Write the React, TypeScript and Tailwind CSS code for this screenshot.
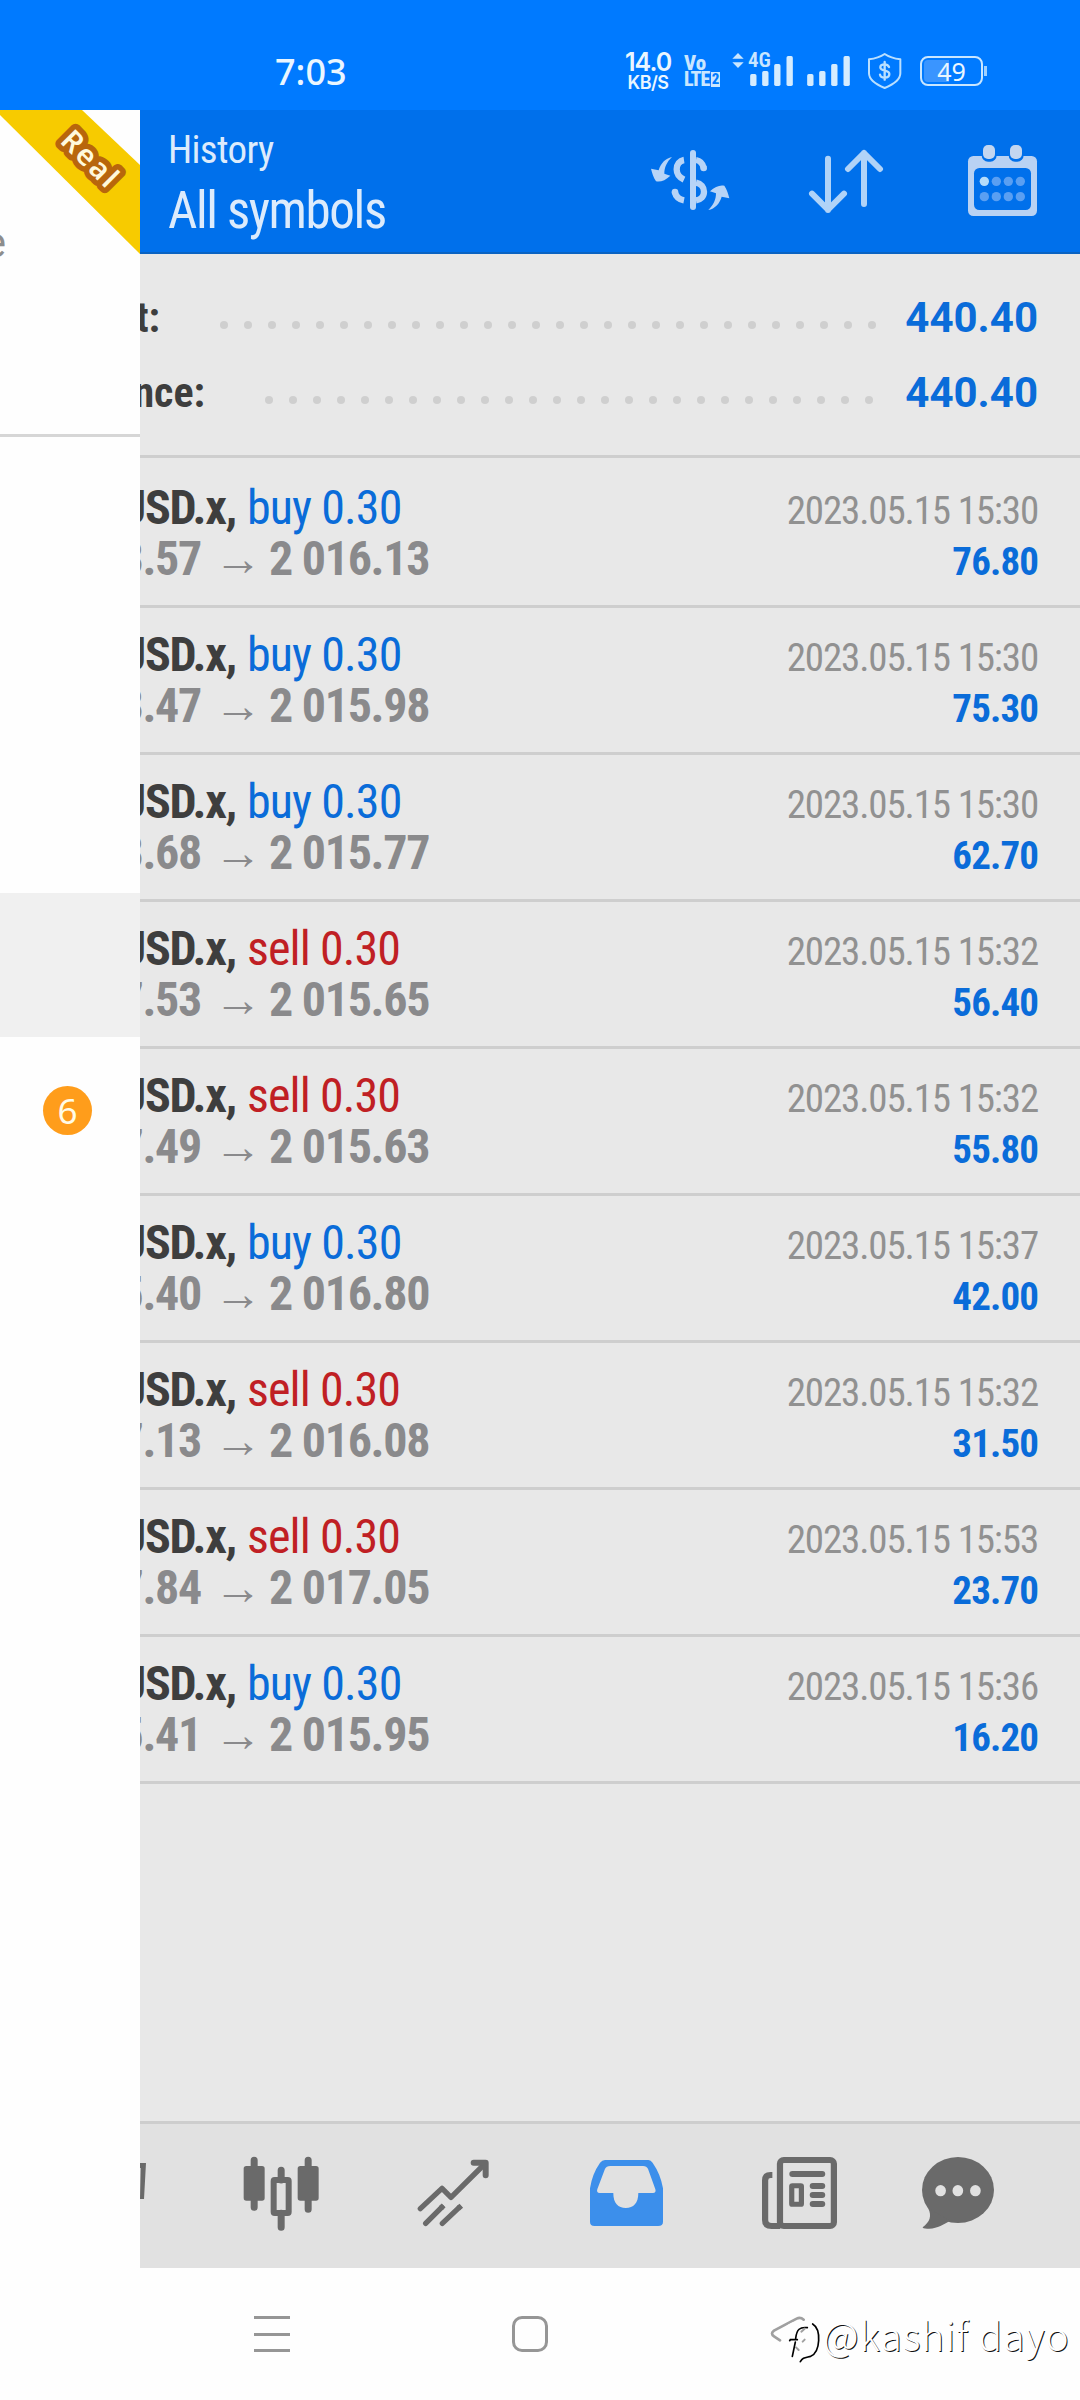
type Deal = {
  side: 'buy' | 'sell';
  open: string;
  close: string;
  time: string;
  profit: string;
};

const deals: Deal[] = [
  { side: 'buy', open: '3.57', close: '2 016.13', time: '2023.05.15 15:30', profit: '76.80' },
  { side: 'buy', open: '3.47', close: '2 015.98', time: '2023.05.15 15:30', profit: '75.30' },
  { side: 'buy', open: '3.68', close: '2 015.77', time: '2023.05.15 15:30', profit: '62.70' },
  { side: 'sell', open: '7.53', close: '2 015.65', time: '2023.05.15 15:32', profit: '56.40' },
  { side: 'sell', open: '7.49', close: '2 015.63', time: '2023.05.15 15:32', profit: '55.80' },
  { side: 'buy', open: '5.40', close: '2 016.80', time: '2023.05.15 15:37', profit: '42.00' },
  { side: 'sell', open: '7.13', close: '2 016.08', time: '2023.05.15 15:32', profit: '31.50' },
  { side: 'sell', open: '7.84', close: '2 017.05', time: '2023.05.15 15:53', profit: '23.70' },
  { side: 'buy', open: '5.41', close: '2 015.95', time: '2023.05.15 15:36', profit: '16.20' },
];

const SignalBars = () => (
  <svg className="h-[30px] w-[43px]" viewBox="0 0 128 90" fill="#d5ecff">
    <rect x="0" y="54" width="19" height="36" rx="5" />
    <rect x="36" y="45" width="19" height="45" rx="5" />
    <rect x="72" y="24" width="19" height="66" rx="5" />
    <rect x="109" y="0" width="19" height="90" rx="5" />
  </svg>
);

const StatusBar = () => (
  <div className="flex h-[110px] bg-[#007aff] pl-[275px] font-[Inter,sans-serif] text-[#eaf6ff]">
    <div className="mt-[50px] w-[350px] font-['Noto_Sans',sans-serif] text-[36px] font-medium leading-[44px]">7:03</div>
    <div className="mt-[51px] w-[46px] text-center">
      <div className="text-[25px] font-semibold leading-[23px] tracking-[-1px]">14.0</div>
      <div className="text-[18px] font-semibold leading-[18px] tracking-[-0.5px]">KB/S</div>
    </div>
    <div className="ml-[13px] mt-[55px] w-[36px] font-['Roboto_Condensed',Roboto,sans-serif] font-extrabold text-[#c9e6ff]">
      <div className="text-[21px] leading-[16px]">Vo</div>
      <div className="flex items-center gap-[2px]">
        <span className="text-[20px] leading-[16px] tracking-[-1px]">LTE</span>
        <span className="w-[11px] bg-[#c9e6ff] text-center text-[15px] leading-[15px] text-[#007aff]">2</span>
      </div>
    </div>
    <div className="relative ml-[30px] mt-[56px] h-[30px] w-[43px]">
      <SignalBars />
      <div className="absolute -left-[18px] -top-[4px] flex items-center gap-[4px] bg-[#007aff] pb-[1px]">
        <svg className="h-[15px] w-[12px]" viewBox="0 0 36 45" fill="#c9e6ff">
          <path d="M18 0 35 17H1ZM18 45 35 28H1Z" />
        </svg>
        <span className="font-['Roboto_Condensed',Roboto,sans-serif] text-[21px] font-semibold leading-[17px] text-[#c9e6ff]">4G</span>
      </div>
    </div>
    <div className="ml-[14px] mt-[56px]">
      <SignalBars />
    </div>
    <svg className="ml-[17px] mt-[52px] h-[38px] w-[35px]" viewBox="802 66 105 114" fill="none">
      <path
        d="M855 72C842 81 826 86 808 88V130C808 150 828 163 855 174C882 163 902 150 902 130V88C884 86 868 81 855 72Z"
        stroke="#b9dfff"
        strokeWidth="6"
        strokeLinejoin="round"
      />
      <path
        d="M868 111C865 105 860 103 855 103C847 103 842 106 842 112C842 127 869 117 869 132C869 139 863 143 855 143C847 143 842 140 841 134M855 96V149"
        stroke="#b9dfff"
        strokeWidth="7"
        strokeLinecap="round"
      />
    </svg>
    <div className="ml-[18px] mt-[56px] flex h-[30px] items-center">
      <div className="flex h-[30px] w-[63px] rounded-[8px] border-[2px] border-[#c9e6ff] p-[2px]">
        <div className="flex h-full w-full items-center justify-center rounded-[4px] bg-linear-to-r from-[#3a95ff] from-45% to-[#007aff] to-45% font-['Noto_Sans',sans-serif] text-[25px] leading-none">
          49
        </div>
      </div>
      <div className="ml-[1px] h-[10px] w-[3px] bg-[#9fd0ff]" />
    </div>
  </div>
);

const Drawer = () => (
  <div className="z-10 w-[140px] shrink-0 bg-[#fefefe]">
    <div className="relative h-[327px] overflow-hidden border-b-[3px] border-[#d6d6d6]">
      <svg className="h-[144px] w-[140px]" viewBox="0 0 140 144">
        <path d="M0 0H82L140 55V144L0 5Z" fill="#f7cb00" />
        <text
          x="59"
          y="32"
          transform="rotate(45 59 32)"
          className="font-['Noto_Sans',sans-serif] text-[29px] font-semibold"
          fill="#fff9dc"
          stroke="#b8660c"
          strokeWidth="11"
          strokeLinejoin="round"
          paintOrder="stroke"
          letterSpacing="2"
        >
          Real
        </text>
      </svg>
      <div className="absolute left-0 top-[108px] w-[6px]">
        <div className="flex justify-end font-[Roboto,sans-serif] text-[42px] leading-[50px] text-[#8d8d8d]">e</div>
      </div>
    </div>
    <div className="mt-[456px] h-[144px] bg-[#f0f0f0]" />
    <div className="flex h-[146px] items-center pl-[43px]">
      <div className="flex size-[49px] items-center justify-center rounded-full bg-[#ff9d1b] font-['Noto_Sans',sans-serif] text-[35px] leading-none text-[#fffbe6]">
        6
      </div>
    </div>
  </div>
);

const Header = () => (
  <div className="flex h-[144px] border-b-[2px] border-[#0a63c2] bg-[#0070eb] pl-[28px] text-[#dcebfc]">
    <div className="w-[482px] pt-[18px]">
      <div className="text-[39px] leading-[44px] tracking-[-0.65px]">History</div>
      <div className="text-[51px] leading-[78px] tracking-[-1.4px]">All symbols</div>
    </div>
    {/* currency filter */}
    <svg className="mt-[39px] h-[62px] w-[80px]" viewBox="150 87 240 186" fill="none">
      <path d="M279 99V261" stroke="#b7d4f7" strokeWidth="18" strokeLinecap="round" />
      <path
        d="M252 120C239 122 230 133 230 148C230 163 239 173 252 179M288 120C300 122 308 131 311 143M288 188C303 191 312 202 312 215C312 229 302 239 288 241M224 215C227 228 237 238 252 241"
        stroke="#b7d4f7"
        strokeWidth="19"
      />
      <circle cx="311" cy="144" r="10" fill="#b7d4f7" />
      <circle cx="225" cy="216" r="10" fill="#b7d4f7" />
      <path d="M216 111C196 115 182 130 176 151L153 146C156 158 160 172 168 184C182 187 196 181 211 167L193 161C193 143 200 126 216 111Z" fill="#b7d4f7" />
      <path
        transform="rotate(180 270.5 190.5)"
        d="M216 111C196 115 182 130 176 151L153 146C156 158 160 172 168 184C182 187 196 181 211 167L193 161C193 143 200 126 216 111Z"
        fill="#b7d4f7"
      />
    </svg>
    {/* sort */}
    <svg className="ml-[78px] mt-[39px] h-[66px] w-[76px]" viewBox="624 87 228 198" fill="none" stroke="#b0d3f8" strokeWidth="18" strokeLinecap="round" strokeLinejoin="round">
      <path d="M684 116V270M636 221 684 269 732 221M792 252V99M744 147 792 99 840 147" />
    </svg>
    {/* calendar */}
    <svg className="ml-[83px] mt-[35px] h-[72px] w-[71px]" viewBox="1101 75 213 216">
      <rect x="1104" y="108" width="207" height="180" rx="16" fill="#b9d2f3" />
      <rect x="1122" y="144" width="171" height="126" rx="16" fill="#0070eb" />
      <rect x="1145" y="66" width="45" height="59" rx="19" fill="#0070eb" />
      <rect x="1226" y="66" width="45" height="59" rx="19" fill="#0070eb" />
      <rect x="1149" y="75" width="36" height="42" rx="15" fill="#c3d6f0" />
      <rect x="1230" y="75" width="36" height="42" rx="15" fill="#c3d6f0" />
      <circle cx="1153" cy="184" r="14" fill="#b5dcfa" />
      {[1189, 1225, 1261].map((cx) => (
        <circle key={cx} cx={cx} cy="184" r="14" fill="#5a9ff2" />
      ))}
      {[1153, 1189, 1225, 1261].map((cx) => (
        <circle key={cx} cx={cx} cy="230" r="14" fill="#5a9ff2" />
      ))}
    </svg>
  </div>
);

const Dots = ({ count }: { count: number }) => (
  <div className="mt-[15px] flex gap-[16px]">
    {Array.from({ length: count }, (_, i) => (
      <span key={i} className="size-[8px] rounded-full bg-[#cfcfcf]" />
    ))}
  </div>
);

const Summary = () => (
  <div className="border-b-[3px] border-[#cecece] pb-[25px] pr-[42px] pt-[26px] text-[42px] font-bold leading-[75px] text-[#3e3e3e]">
    <div className="flex h-[75px] items-center">
      <div className="flex w-[20px] justify-end">t:</div>
      <div className="ml-auto mr-[29px]">
        <Dots count={28} />
      </div>
      <span className="font-[Roboto,sans-serif] text-[#0a6cd9]">440.40</span>
    </div>
    <div className="flex h-[75px] items-center">
      <div className="flex w-[65px] justify-end">nce:</div>
      <div className="ml-auto mr-[32px]">
        <Dots count={26} />
      </div>
      <span className="font-[Roboto,sans-serif] text-[#0a6cd9]">440.40</span>
    </div>
  </div>
);

const DealRow = ({ deal }: { deal: Deal }) => (
  <div className="h-[147px] border-b-[3px] border-[#cecece] pr-[42px] pt-[21px]">
    <div className="flex h-[51px] items-baseline whitespace-pre text-[48px] leading-[51px]">
      <div className="flex w-[96px] justify-end font-bold tracking-[-1.3px] text-[#3e3e3e]">USD.x,</div>
      <span className={deal.side === 'buy' ? 'ml-[11px] tracking-[-0.9px] text-[#0a6cd9]' : 'ml-[11px] tracking-[-0.9px] text-[#c01f24]'}>
        {deal.side} 0.30
      </span>
      <span className="ml-auto text-[39px] tracking-[-1.15px] text-[#919191]">{deal.time}</span>
    </div>
    <div className="flex h-[51px] items-baseline whitespace-pre text-[48px] font-bold leading-[51px] tracking-[-1.3px] text-[#8a8a8c]">
      <div className="flex w-[61px] justify-end">{deal.open}</div>
      <span className="ml-[13px] w-[55px] font-['Liberation_Sans',sans-serif]">→</span>
      <span>{deal.close}</span>
      <span className="ml-auto text-[39px] tracking-[-0.9px] text-[#0a6cd9]">{deal.profit}</span>
    </div>
  </div>
);

const TabBar = () => (
  <div className="flex h-[147px] items-start border-t-[3px] border-[#cdcdcd] bg-[#e1e1e1]">
    <div className="w-[54px] pt-[39px]">
      <svg className="h-[36px] w-[6px]" viewBox="120 190 18 108">
        <path d="M120 190H138L132 298H120L122 205H120Z" fill="#6a6a6a" />
      </svg>
    </div>
    {/* chart */}
    <div className="flex w-[173px] justify-center pt-[31px]">
      <svg className="h-[78px] w-[78px]" viewBox="427 165 234 234" fill="none" stroke="#6a6a6a" strokeWidth="21" strokeLinecap="round">
        <path d="M463.500 181V322M625.500 181V328M544.500 211V240M544.500 340V382" />
        <rect x="432" y="198" width="63" height="104" rx="8" fill="#6a6a6a" stroke="none" />
        <rect x="594" y="198" width="63" height="104" rx="8" fill="#6a6a6a" stroke="none" />
        <rect x="522" y="240" width="45" height="99" rx="3" strokeWidth="18" />
      </svg>
    </div>
    {/* trade */}
    <div className="flex w-[173px] justify-center pt-[33px]">
      <svg className="h-[72px] w-[76px]" viewBox="949 171 228 216" fill="none" stroke="#6a6a6a" strokeWidth="16" strokeLinecap="round" strokeLinejoin="round">
        <path d="M962 326 1027 265 1054 292 1155 192" />
        <path d="M1122 188H1158V226" strokeWidth="18" />
        <path d="M978 370 1026 322M1028 370 1078 323" />
        <path d="M1024 324 1032 316M1076 325 1085 317" strokeLinecap="butt" />
      </svg>
    </div>
    {/* history */}
    <div className="flex w-[173px] justify-center pt-[36px]">
      <svg className="h-[66px] w-[73px]" viewBox="147 180 210 198" preserveAspectRatio="none">
        <path
          fillRule="evenodd"
          fill="#3c8feb"
          d="M190 180H315Q322 180 327 188Q350 222 357 265V365Q357 378 343 378H160Q147 378 147 365V265Q153 222 176 188Q182 180 190 180ZM205 198Q194 198 190 207L168 268Q165 279 175 279H214C214 310 228 324 250 324C272 324 286 310 286 279H328Q338 279 335 268L314 207Q310 198 300 198Z"
        />
      </svg>
    </div>
    {/* news */}
    <div className="flex w-[173px] justify-center pt-[33px]">
      <svg className="h-[72px] w-[75px]" viewBox="647 171 217 216" preserveAspectRatio="none" fill="none" stroke="#6a6a6a" strokeWidth="18">
        <rect x="699" y="180" width="156" height="198" rx="11" />
        <path d="M677 225H672Q656 225 656 241V360Q656 378 675 378H700" />
        <path d="M735 222H821M794 258H821M794 285H821M794 312H821" strokeLinecap="round" />
        <rect x="733" y="257" width="28" height="56" rx="2" strokeWidth="15" />
      </svg>
    </div>
    {/* messages */}
    <div className="flex w-[143px] justify-center pt-[33px]">
      <svg className="h-[72px] w-[72px]" viewBox="1109 171 209 216" preserveAspectRatio="none" fill="#6a6a6a">
        <ellipse cx="1213.500" cy="270" rx="104.500" ry="99" />
        <path d="M1127 325C1138 348 1132 366 1111 382Q1110 387 1130 386C1155 384 1172 374 1190 362Z" />
        <ellipse cx="1163" cy="272" rx="15.500" ry="17" fill="#e1e1e1" />
        <ellipse cx="1213" cy="272" rx="15.500" ry="17" fill="#e1e1e1" />
        <ellipse cx="1264" cy="272" rx="15.500" ry="17" fill="#e1e1e1" />
      </svg>
    </div>
  </div>
);

const SystemNav = () => (
  <div className="relative flex h-[132px] bg-[#fefefe] pl-[254px] pt-[48px]">
    <div className="flex h-[36px] w-[36px] flex-col justify-between">
      <div className="h-[3px] bg-[#969696]" />
      <div className="h-[3px] bg-[#969696]" />
      <div className="h-[3px] bg-[#969696]" />
    </div>
    <div className="ml-[222px] size-[36px] rounded-[10px] border-[3px] border-[#969696]" />
    <svg className="ml-[222px] h-[48px] w-[54px]" viewBox="30 48 162 144" fill="none" strokeLinecap="round">
      <path d="M60 121 42 109Q30 101 42 92L110 56Q121 50 131 59" stroke="#a0a0a0" strokeWidth="8" />
      <path d="M76 80C95 62 125 60 150 72C180 90 180 155 150 170C135 174 130 172 120 185C112 165 85 160 76 80Z" fill="#fefefe" />
      <path d="M158 72C184 88 182 155 152 169C136 173 128 172 121 185" stroke="#000" strokeWidth="5" />
      <path d="M142 83C120 80 110 88 107 115M89 122 91 119H112M106 126 97 169" stroke="#000" strokeWidth="5" />
      <path d="M134 86 124 95M134 119 128 125M108 142 116 150" stroke="#a0a0a0" strokeWidth="6" />
    </svg>
    <div className="absolute left-[823px] top-[44px] whitespace-pre font-['Noto_Sans_CJK_SC',sans-serif] text-[39px] font-light leading-[44px] tracking-[1px] text-white [text-shadow:1px_1px_0_#111]">
      @kashif dayo
    </div>
  </div>
);

const App = () => {
  return (
    <div className="flex h-[2400px] w-[1080px] flex-col overflow-hidden font-['Roboto_Condensed',Roboto,sans-serif]">
      <StatusBar />
      <div className="flex h-[2158px]">
        <Drawer />
        <div className="flex w-[940px] flex-col overflow-hidden bg-[#e8e8e8]">
          <Header />
          <Summary />
          <div className="flex-1 pt-[3px]">
            {deals.map((deal) => (
              <DealRow key={deal.close} deal={deal} />
            ))}
          </div>
          <TabBar />
        </div>
      </div>
      <SystemNav />
    </div>
  );
};

export default App;
